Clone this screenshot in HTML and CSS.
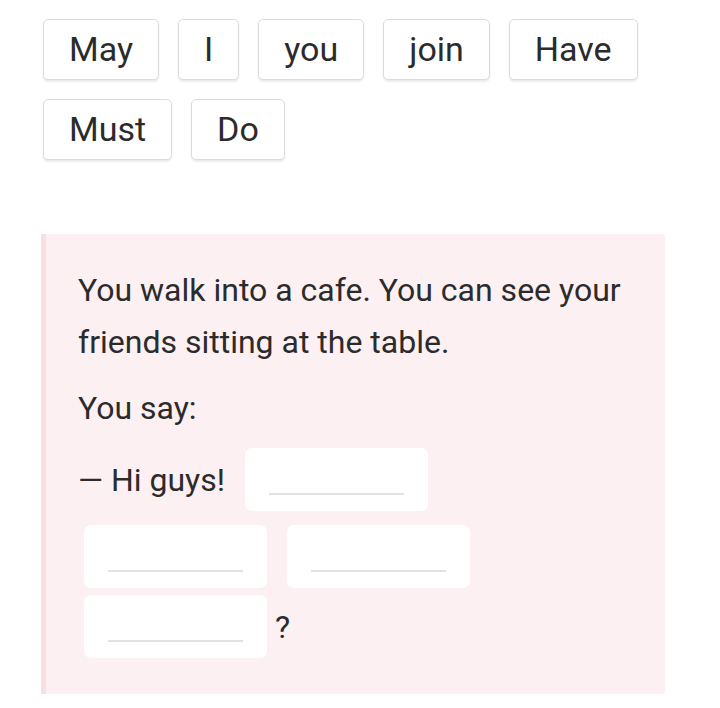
FILE: index.html
```html
<!DOCTYPE html>
<html lang="en">
<head>
  <meta charset="UTF-8">
  <meta name="viewport" content="width=device-width, initial-scale=1.0">
  <title>Word order exercise</title>
  <link rel="stylesheet" href="styles.css">
</head>
<body>
  <div class="words">
    <span class="word">May</span>
    <span class="word">I</span>
    <span class="word">you</span>
    <span class="word">join</span>
    <span class="word">Have</span>
    <span class="word">Must</span>
    <span class="word">Do</span>
  </div>

  <div class="task">
    <p class="situation">You walk into a cafe. You can see your friends sitting at the table.</p>
    <p class="say">You say:</p>
    <div class="answer">
      <span class="line-text">— Hi guys!</span>
      <span class="blank"></span>
      <span class="row-break"></span>
      <span class="blank"></span>
      <span class="blank"></span>
      <span class="blank"></span>
      <span class="line-text end">?</span>
    </div>
  </div>
</body>
</html>
```

FILE: styles.css
```css
body {
  margin: 0;
  padding: 19px 0 0 43px;
  font-family: Roboto, 'Liberation Sans', sans-serif;
  color: #2b2b2b;
  background: #fff;
}
.words {
  display: flex;
  flex-wrap: wrap;
  gap: 19px;
  width: 620px;
}
.word {
  display: inline-block;
  height: 61px;
  line-height: 59px;
  padding: 0 25px;
  font-size: 34px;
  border: 1px solid #dcdcdc;
  border-radius: 5px;
  box-sizing: border-box;
  box-shadow: 0 2px 2px rgba(0,0,0,0.08);
  background: #fff;
}
.task {
  margin: 74px 0 0 -2px;
  width: 624px;
  box-sizing: border-box;
  background: #fdf0f2;
  border-left: 5px solid #f7e0e4;
  padding: 30px 30px 36px 32px;
  font-size: 32px;
  line-height: 52px;
}
.task p {
  margin: 0;
}
.situation {
  margin-bottom: 14px !important;
}
.say {
  margin-bottom: 14px !important;
}
.answer {
  display: flex;
  flex-wrap: wrap;
  align-items: center;
  row-gap: 7px;
  margin-top: 14px;
}
.line-text {
  line-height: 40px;
}
.row-break {
  flex-basis: 100%;
  height: 0;
  margin-top: -7px;
}
.blank {
  position: relative;
  width: 183px;
  height: 63px;
  margin: 0 14px 0 6px;
  background: #fff;
  border-radius: 7px;
}
.answer .line-text + .blank {
  margin-left: 20px;
}
.blank::after {
  content: "";
  position: absolute;
  left: 24px;
  right: 24px;
  bottom: 16px;
  border-bottom: 2px solid #e2e2e2;
}
.end {
  margin-left: -6px;
}
```
